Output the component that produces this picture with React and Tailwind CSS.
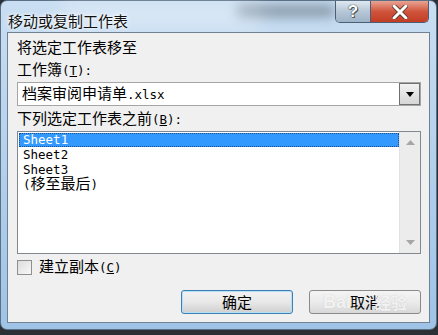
import React from 'react';

const cjk = "font-['Noto_Sans_CJK_SC',_sans-serif]";
const M = ({ children }) => (
  <span className="font-['DejaVu_Sans_Mono',_monospace] text-[12.5px]">{children}</span>
);

const App = () => {
  return (
    <div className={`relative w-[438px] h-[335px] overflow-hidden bg-[#2b3036] ${cjk} text-[15px] leading-[16px] text-black`}>
      <div className="relative flex flex-col w-[437px] h-[330px] rounded-[7px] border border-[#5a7085] bg-gradient-to-b from-[#c9def2] via-[#b3d0ec] to-[#9fc3e6]">
        {/* blurred background behind glass */}
        <div className="absolute left-[235px] top-[4px] w-[100px] h-[12px] rounded-full bg-[#5a6a78] blur-[6px] opacity-60" />
        <div className="absolute left-[60px] top-0 w-[200px] h-[30px] bg-white/30 blur-[10px]" />

        {/* title bar */}
        <div className="relative flex items-start h-[31px]">
          <div className="pl-[7px] pt-[12px] text-[15px] leading-[16px] text-[#111] [text-shadow:0_0_6px_#fff,0_0_3px_#fff]">
            移动或复制工作表
          </div>
          <div className="ml-auto mr-[7px] flex h-[22px] rounded-b-[5px] border border-t-0 border-[#4a5f75] overflow-hidden">
            <div className="w-[35px] flex items-center justify-center bg-gradient-to-b from-[#dfe8f0] via-[#b6c6d6] to-[#9fb4c8] border-r border-[#4a5f75]">
              <span className="font-['Liberation_Sans',_sans-serif] font-bold text-[17px] leading-none text-white [text-shadow:0_0_1px_#333,0_0_1px_#333,1px_1px_0_#555]">?</span>
            </div>
            <div className="w-[57px] flex items-center justify-center bg-gradient-to-b from-[#e8a493] via-[#d0533c] to-[#c23d24]">
              <svg width="16" height="14" viewBox="0 0 16 14">
                <path d="M2 1 L14 13 M14 1 L2 13" stroke="#4a2a22" strokeWidth="4.5" strokeLinecap="round" />
                <path d="M2 1 L14 13 M14 1 L2 13" stroke="#ffffff" strokeWidth="3" strokeLinecap="round" />
              </svg>
            </div>
          </div>
        </div>

        {/* client area */}
        <div className="relative mx-[6px] mb-[6px] flex-1 flex flex-col border border-[#6f8193] bg-[#f0f0f0] pl-[9px] pr-[8px]">
          <div className="mt-[6px] h-[16px]">将选定工作表移至</div>
          <div className="mt-[6px] h-[16px]">
            工作簿<M>(<span className="underline">T</span>):</M>
          </div>

          <div className="mt-[5px] h-[24px] flex items-center border border-[#a5a5a5] bg-white">
            <div className="flex-1 pl-[4px]">
              档案审阅申请单<M>.xlsx</M>
            </div>
            <div className="w-[21px] h-[22px] flex items-center justify-center border border-[#707070] bg-gradient-to-b from-[#f2f2f2] to-[#d6d6d6]">
              <svg width="8" height="5" viewBox="0 0 8 5"><path d="M0 0 H8 L4 5 Z" fill="#000" /></svg>
            </div>
          </div>

          <div className="mt-[4px] h-[16px]">
            下列选定工作表之前<M>(<span className="underline">B</span>):</M>
          </div>

          <div className="mt-[5px] h-[123px] flex border border-[#828790] bg-white">
            <div className="flex-1 pt-[1px] pl-[1px]">
              <div className="h-[14px] flex items-center pl-[3px] bg-[#3399ff] text-white border border-dotted border-[#1c4f86] leading-[14px]">
                <M>Sheet1</M>
              </div>
              <div className="-mt-[2px] leading-[15px]">
                <div className="h-[15px] pl-[4px]"><M>Sheet2</M></div>
                <div className="h-[15px] pl-[4px]"><M>Sheet3</M></div>
                <div className="h-[15px] pl-[4px]"><M>(</M>移至最后<M>)</M></div>
              </div>
            </div>
            <div className="w-[21px] flex flex-col items-center justify-between py-[8px] bg-[#ececec] border-l border-[#e2e2e2]">
              <svg width="9" height="5" viewBox="0 0 9 5"><path d="M0 5 H9 L4.5 0 Z" fill="#a6a6a6" /></svg>
              <svg width="9" height="5" viewBox="0 0 9 5"><path d="M0 0 H9 L4.5 5 Z" fill="#a6a6a6" /></svg>
            </div>
          </div>

          <div className="mt-[5px] flex items-center h-[16px]">
            <div className="w-[15px] h-[15px] border border-[#8f8f8f] bg-gradient-to-br from-[#dcdcdc] to-[#f8f8f8]" />
            <div className="ml-[7px]">
              建立副本<M>(<span className="underline">C</span>)</M>
            </div>
          </div>

          <div className="mt-[15px] flex justify-end gap-[16px]">
            <div className="w-[112px] h-[24px] flex items-center justify-center rounded-[3px] border border-[#3c7fb1] bg-gradient-to-b from-[#f2f2f2] via-[#e8e8e8] to-[#cfcfcf] shadow-[inset_0_0_0_1px_#b5e0f7]">
              确定
            </div>
            <div className="relative w-[112px] h-[24px] flex items-center justify-center rounded-[3px] border border-[#8a8a8a] bg-gradient-to-b from-[#f4f4f4] via-[#ebebeb] to-[#d8d8d8]">
              取消
              <div className="absolute inset-0 flex items-center justify-center gap-[24px] font-['Liberation_Sans',_sans-serif] font-bold text-[18px] text-white/80 [text-shadow:0_0_1px_#bbb]">
                <span>Bai</span><span className={`${cjk} text-[16px]`}>经验</span>
              </div>
            </div>
          </div>
        </div>
      </div>
    </div>
  );
};

export default App;
